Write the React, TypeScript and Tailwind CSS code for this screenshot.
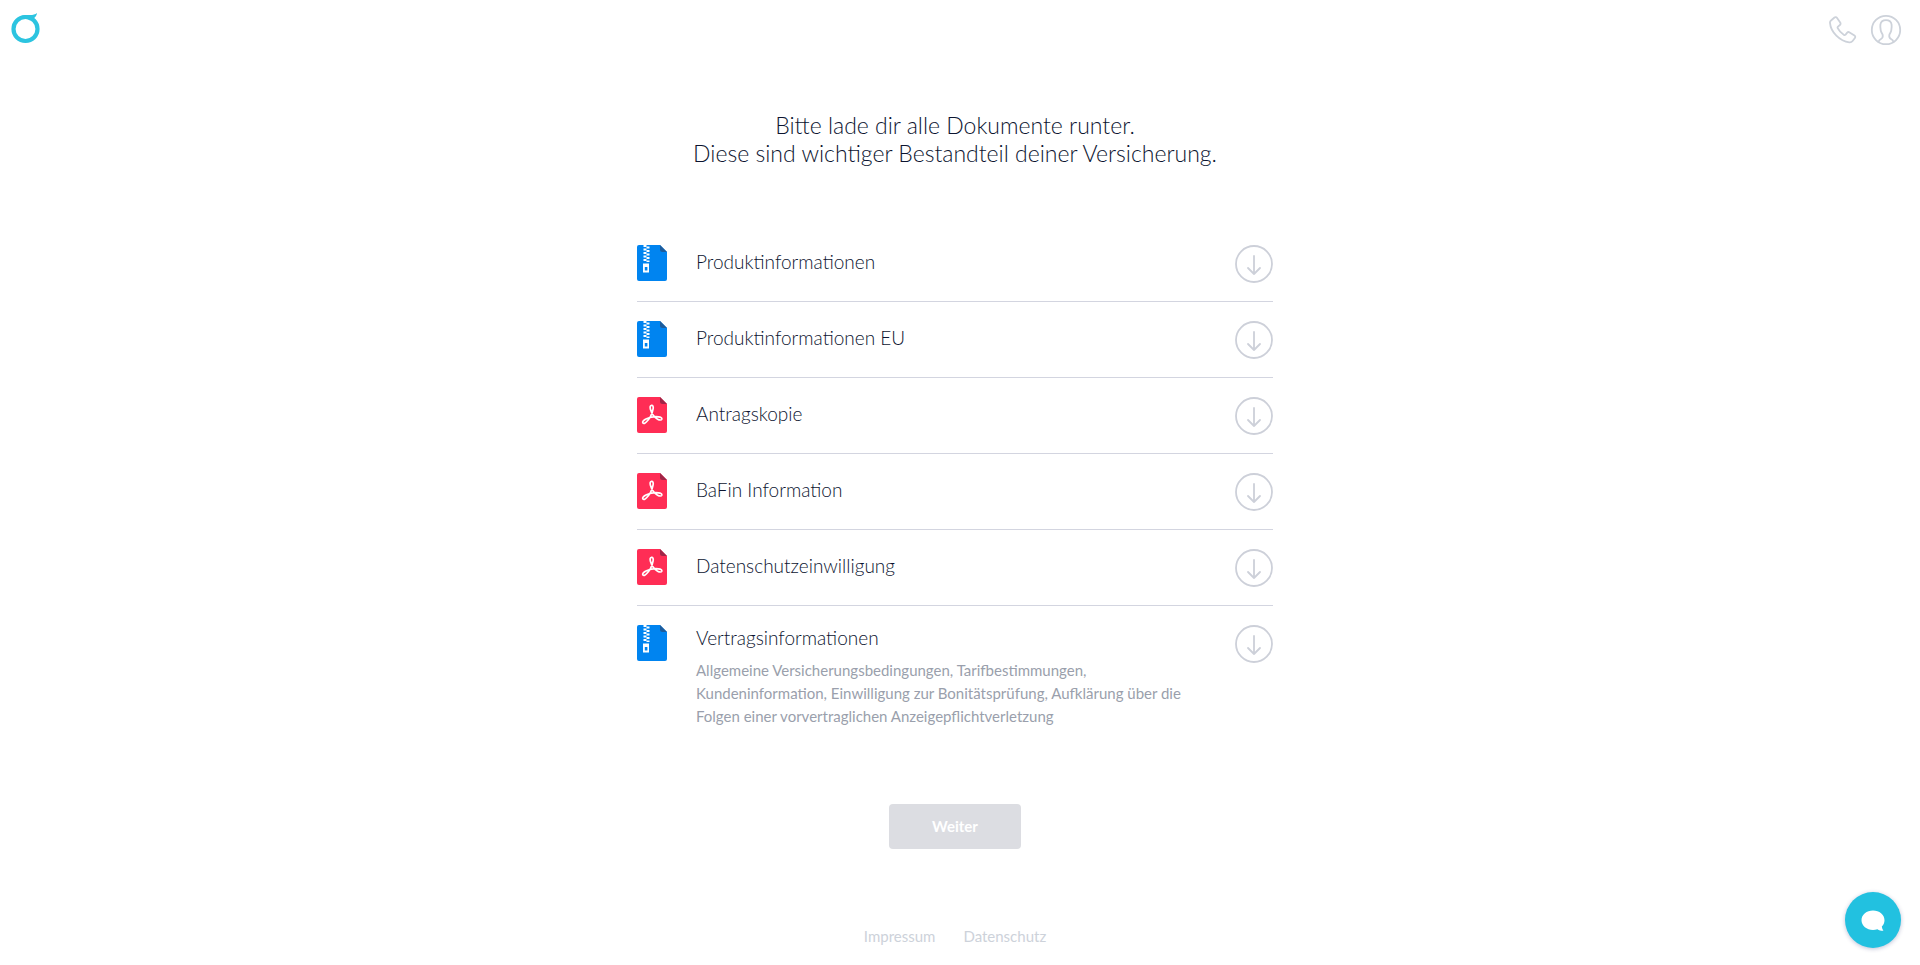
type DocumentKind = 'zip' | 'pdf';

interface DocumentEntry {
  title: string;
  kind: DocumentKind;
  description?: string;
}

const documents: DocumentEntry[] = [
  { title: 'Produktinformationen', kind: 'zip' },
  { title: 'Produktinformationen EU', kind: 'zip' },
  { title: 'Antragskopie', kind: 'pdf' },
  { title: 'BaFin Information', kind: 'pdf' },
  { title: 'Datenschutzeinwilligung', kind: 'pdf' },
  {
    title: 'Vertragsinformationen',
    kind: 'zip',
    description:
      'Allgemeine Versicherungsbedingungen, Tarifbestimmungen, Kundeninformation, Einwilligung zur Bonitätsprüfung, Aufklärung über die Folgen einer vorvertraglichen Anzeigepflichtverletzung',
  },
];

function Logo() {
  return (
    <svg className="h-8 w-8" viewBox="0 0 32 32" aria-hidden="true">
      <circle cx="15.5" cy="17" r="12" fill="none" stroke="#2cc4e0" strokeWidth="4.2" />
      <path d="M10 4.400C13 2.700 17 3 20 3c3 0 5.200-.4 7-2-.2 2.200-1.500 4.500-4.200 5.800L20 8.500 14 5z" fill="#2cc4e0" />
    </svg>
  );
}

function PhoneIcon() {
  return (
    <svg className="h-7 w-7" viewBox="0 0 28 28" fill="none" stroke="#cdd2da" strokeWidth="1.800" strokeLinejoin="round" aria-hidden="true">
      <path d="M2 4.500 5.500 1.500C6.200.9 7.300 1 7.900 1.800l3.300 4.800c.5.800.4 1.800-.3 2.400L9 10.600c-.5.5-.6 1-.3 1.600 1.400 2.900 3.500 5 6.300 6.700.6.300 1.100.2 1.600-.3l1.600-1.900c.6-.7 1.600-.8 2.400-.3l4.900 3.200c.8.500 1 1.600.4 2.400l-2.300 3c-.8 1-2 1.500-3.300 1.300C10.800 25.200 1.700 16.200 1 6.900.9 6 1.200 5.100 2 4.500z" />
    </svg>
  );
}

function ProfileIcon() {
  return (
    <svg className="h-8 w-8" viewBox="0 0 32 32" fill="none" stroke="#cdd2da" strokeWidth="1.800" strokeLinejoin="round" aria-hidden="true">
      <circle cx="16" cy="16" r="14.200" />
      <path d="M8.500 28c.3-1.500 1.200-2.300 2.500-3 1.600-.8 2-2.200 1.700-4-.3-1.600-1.700-2.700-1.900-4.300-.3-2.100-.7-4-.4-6 .4-3 2.400-4.500 5.600-4.500s5.200 1.500 5.600 4.500c.3 2-.1 3.900-.4 6-.2 1.600-1.600 2.700-1.900 4.300-.3 1.800.1 3.200 1.700 4 1.300.7 2.200 1.500 2.500 3" />
    </svg>
  );
}

function ZipIcon() {
  return (
    <svg className="h-9 w-[30px]" viewBox="0 0 30 36" aria-hidden="true">
      <path d="M2 0h21l7 7v27a2 2 0 0 1-2 2H2a2 2 0 0 1-2-2V2a2 2 0 0 1 2-2z" fill="#0084f0" />
      <path d="M23 0l7 7h-4.500A2.500 2.500 0 0 1 23 4.500z" fill="#1d5c9c" />
      <g fill="#fff">
        <rect x="6.500" y="0" width="3" height="2" />
        <rect x="9.500" y="1.500" width="3" height="2" />
        <rect x="6.500" y="3.500" width="3" height="2" />
        <rect x="9.500" y="5" width="3" height="2" />
        <rect x="6.500" y="7" width="3" height="2" />
        <rect x="9.500" y="8.500" width="3" height="2" />
        <rect x="6.500" y="10.500" width="3" height="2" />
        <rect x="9.500" y="12" width="3" height="2" />
        <rect x="6.500" y="14" width="3" height="2" />
        <rect x="9.500" y="15.500" width="3" height="1.500" />
        <path fillRule="evenodd" d="M6 18.500h6V27.500H6zM7.800 22v3.500h2.600V22z" />
      </g>
    </svg>
  );
}

function PdfIcon() {
  return (
    <svg className="h-9 w-[30px]" viewBox="0 0 30 36" aria-hidden="true">
      <path d="M2 0h21l7 7v27a2 2 0 0 1-2 2H2a2 2 0 0 1-2-2V2a2 2 0 0 1 2-2z" fill="#ff2d55" />
      <path d="M23 0l7 7h-4.500A2.500 2.500 0 0 1 23 4.500z" fill="#a02547" />
      <path
        d="M14.500 8.300c1.500-.2 2 1.500 1.600 3.500-.7 4-3.600 10-6.800 13.200-1.300 1.300-2.600 1.900-3.400 1-1-1.300.9-3 3.600-4.200 3.600-1.600 8.500-2.500 12-2 2.300.3 3.700 1.100 3.300 2.400-.4 1.100-2.300 1-4.200 0-3.200-1.700-6-5.900-7.100-9.600-.6-2.300-.6-4.100 1-4.300z"
        fill="none"
        stroke="#fff"
        strokeWidth="1.700"
      />
    </svg>
  );
}

function DownloadIcon() {
  return (
    <svg className="h-[38px] w-[38px]" viewBox="0 0 38 38" fill="none" stroke="#cdd0d9" strokeWidth="1.800" strokeLinecap="round" strokeLinejoin="round" aria-hidden="true">
      <circle cx="19" cy="19" r="18" />
      <path d="M19 11v18M13 23l6 6 6-6" />
    </svg>
  );
}

function DocumentRow({ title, kind, description }: DocumentEntry) {
  return (
    <li className="flex items-start border-b border-[#d3d5e0] pt-[19px] pb-[18px] last:border-b-0">
      <span className="shrink-0">{kind === 'zip' ? <ZipIcon /> : <PdfIcon />}</span>
      <div className={description ? 'ml-[29px] flex-1' : 'ml-[29px] flex-1 py-1'}>
        <h2 className="text-[19px] leading-[26px] font-light text-[#0c1430]">{title}</h2>
        {description && (
          <p className="mt-2 max-w-[500px] text-[15px] leading-[23px] text-[#9a9fac]">{description}</p>
        )}
      </div>
      <button type="button" aria-label={`${title} herunterladen`} className="shrink-0 cursor-pointer rounded-full">
        <DownloadIcon />
      </button>
    </li>
  );
}

export default function App() {
  return (
    <div className="min-h-screen bg-white pr-[10px] font-['Lato',sans-serif] text-[#2f3853]">
      <header className="flex items-start justify-between pt-[14px] pr-2 pl-[10px]">
        <a href="#" aria-label="Startseite" className="-mt-0.5 block">
          <Logo />
        </a>
        <nav className="flex items-center gap-[13px]">
          <a href="#" aria-label="Telefon">
            <PhoneIcon />
          </a>
          <a href="#" aria-label="Profil">
            <ProfileIcon />
          </a>
        </nav>
      </header>

      <main className="mx-auto flex max-w-[636px] flex-col pt-[65px]">
        <h1 className="text-center text-[23px] leading-7 font-light text-[#0c1430]">
          Bitte lade dir alle Dokumente runter.
          <br />
          Diese sind wichtiger Bestandteil deiner Versicherung.
        </h1>
        <ul className="mt-[59px]">
          {documents.map((entry) => (
            <DocumentRow key={entry.title} {...entry} />
          ))}
        </ul>
        <button
          type="button"
          disabled
          className="mt-[58px] h-[45px] w-[132px] self-center rounded bg-[#dcdde2] text-[15px] font-bold text-white"
        >
          Weiter
        </button>
      </main>

      <footer className="flex justify-center gap-7 pt-[75px] pb-4 text-[15px] leading-6 text-[#cdd2da]">
        <a href="#">Impressum</a>
        <a href="#">Datenschutz</a>
      </footer>

      <button
        type="button"
        aria-label="Chat öffnen"
        className="fixed right-[19px] bottom-[17px] flex h-14 w-14 items-center justify-center rounded-full bg-[#22c1e0] shadow-[0_1px_4px_rgba(40,50,120,0.3)]"
      >
        <svg className="h-6 w-6" viewBox="0 0 24 24" fill="#fff" aria-hidden="true">
          <path d="M12 2.500c6.300 0 11.500 4.200 11.500 9.700 0 2.500-1 4.700-2.700 6.400.2 1.500.7 2.900 1.600 4.200-2.100.1-4.200-.4-6-1.500-1.400.4-2.900.6-4.400.6C5.700 21.900.5 17.700.5 12.200S5.700 2.500 12 2.500z" />
        </svg>
      </button>
    </div>
  );
}
